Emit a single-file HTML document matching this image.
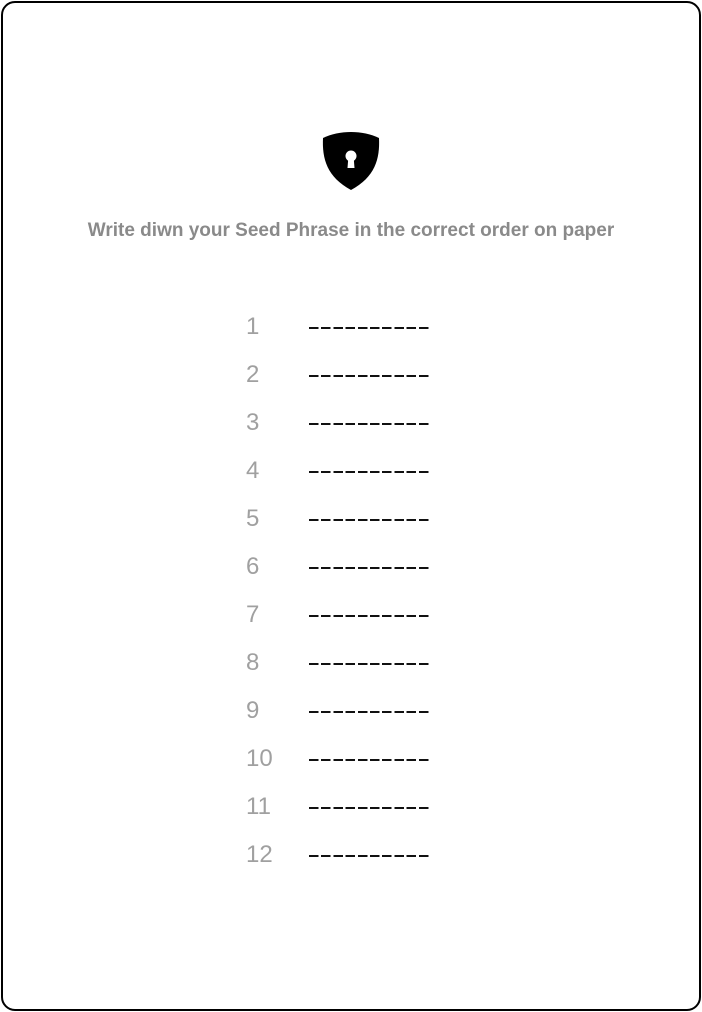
<!DOCTYPE html>
<html><head><style>
html,body{margin:0;padding:0;background:#fff;}
body{width:702px;height:1012px;position:relative;font-family:"Liberation Sans",sans-serif;overflow:hidden}
.frame{position:absolute;left:1px;top:1px;width:696px;height:1006px;border:2px solid #000;border-radius:14px;}
.title{position:absolute;left:0;width:702px;top:220px;text-align:center;font-size:19px;font-weight:bold;color:#8a8a8a;}
.row{position:absolute;left:246px;height:30px;}
.num{position:absolute;left:0;top:2px;font-size:24px;color:#a0a0a0;line-height:30px;}
.dash{position:absolute;left:63px;top:17px;width:122px;height:2px;background:repeating-linear-gradient(90deg,#111 0 9.5px,transparent 9.5px 12.2px);}
</style></head><body>
<div class="frame"></div>
<svg style="position:absolute;left:321px;top:131px" width="60" height="60" viewBox="0 0 60 60">
<path d="M30 1 C20 1 10 3 2 7 C1 28 6 46 30 59 C54 46 59 28 58 7 C50 3 40 1 30 1Z" fill="#000"/>
<circle cx="30" cy="25" r="5.5" fill="#fff"/>
<path d="M27.3 27 L26.5 37 L33.5 37 L32.7 27Z" fill="#fff"/>
</svg>
<div class="title">Write diwn your Seed Phrase in the correct order on paper</div>
<div class="row" style="top:310px"><div class="num">1</div><div class="dash"></div></div>
<div class="row" style="top:358px"><div class="num">2</div><div class="dash"></div></div>
<div class="row" style="top:406px"><div class="num">3</div><div class="dash"></div></div>
<div class="row" style="top:454px"><div class="num">4</div><div class="dash"></div></div>
<div class="row" style="top:502px"><div class="num">5</div><div class="dash"></div></div>
<div class="row" style="top:550px"><div class="num">6</div><div class="dash"></div></div>
<div class="row" style="top:598px"><div class="num">7</div><div class="dash"></div></div>
<div class="row" style="top:646px"><div class="num">8</div><div class="dash"></div></div>
<div class="row" style="top:694px"><div class="num">9</div><div class="dash"></div></div>
<div class="row" style="top:742px"><div class="num">10</div><div class="dash"></div></div>
<div class="row" style="top:790px"><div class="num">11</div><div class="dash"></div></div>
<div class="row" style="top:838px"><div class="num">12</div><div class="dash"></div></div>
</body></html>
